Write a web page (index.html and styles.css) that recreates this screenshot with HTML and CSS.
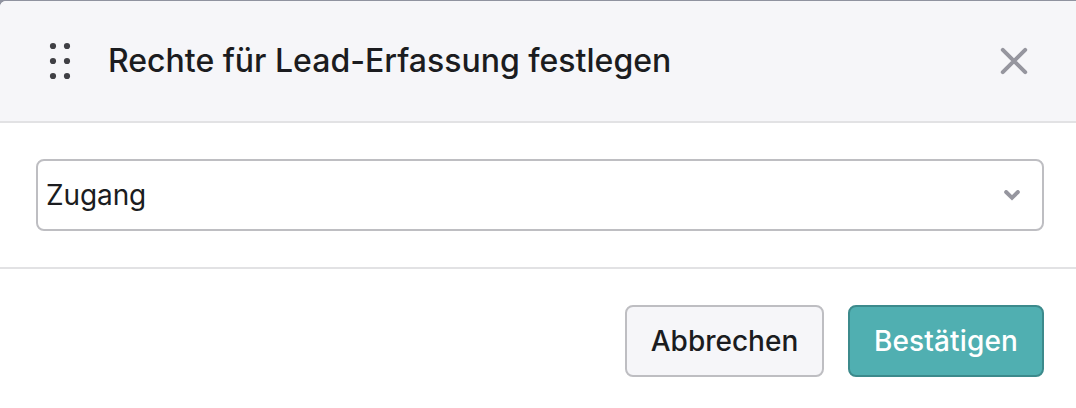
FILE: index.html
```html
<!DOCTYPE html>
<html lang="de">
<head>
    <meta charset="UTF-8">
    <meta name="viewport" content="width=device-width, initial-scale=1.0">
    <title>Rechte für Lead-Erfassung festlegen</title>
    <link rel="stylesheet" href="styles.css">
</head>
<body>
    <div class="dialog">
        <div class="dialog-header">
            <svg class="drag-handle" width="22" height="38" viewBox="0 0 22 38" fill="#404045">
                <circle cx="4" cy="4" r="3.1"/>
                <circle cx="18" cy="4" r="3.1"/>
                <circle cx="4" cy="19" r="3.1"/>
                <circle cx="18" cy="19" r="3.1"/>
                <circle cx="4" cy="34" r="3.1"/>
                <circle cx="18" cy="34" r="3.1"/>
            </svg>
            <h1 class="dialog-title">Rechte für Lead-Erfassung festlegen</h1>
            <button class="close-button" aria-label="Schließen">
                <svg width="28" height="28" viewBox="0 0 28 28" fill="none" stroke="#96969f" stroke-width="4" stroke-linecap="round">
                    <path d="M2.8 2.8L25.2 25.2M25.2 2.8L2.8 25.2"/>
                </svg>
            </button>
        </div>

        <div class="dialog-body">
            <div class="select" tabindex="0">
                <span class="select-label">Zugang</span>
                <svg width="16" height="11" viewBox="0 0 16 11" fill="none" stroke="#96969f" stroke-width="3.9" stroke-linecap="round">
                    <path d="M2.1 2L8 7.8L13.9 2"/>
                </svg>
            </div>
        </div>

        <div class="dialog-footer">
            <button class="button">Abbrechen</button>
            <button class="button button-primary">Bestätigen</button>
        </div>
    </div>
</body>
</html>
```
FILE: styles.css
```css
* {
    box-sizing: border-box;
}

body {
    margin: 0;
    padding-top: 1px;
    height: 408px;
    background-color: #9093a0;
    font-family: Inter, "Liberation Sans", sans-serif;
    color: #1b1c20;
    overflow: hidden;
}

.dialog {
    height: 407px;
    background-color: white;
    border-radius: 6px 0 0 0;
    overflow: hidden;
}

.dialog-header {
    display: flex;
    align-items: center;
    height: 122px;
    padding: 0 48px 0 49px;
    background-color: #f6f6f9;
    border-bottom: 2px solid #e2e2e4;
}

.dialog-title {
    flex: 1;
    margin: 0 0 0 37px;
    font-size: 32px;
    line-height: 40px;
    font-weight: 500;
}

.close-button {
    display: flex;
    padding: 0;
    border: none;
    background: none;
    cursor: pointer;
}

.dialog-body {
    padding: 36px 32px 36px 36px;
    border-bottom: 2px solid #e2e2e4;
}

.select {
    display: flex;
    align-items: center;
    justify-content: space-between;
    height: 72px;
    padding: 0 22px 0 8px;
    border: 2px solid #bebec2;
    border-radius: 8px;
    font-size: 28px;
    letter-spacing: -0.1px;
    cursor: pointer;
}

.dialog-footer {
    display: flex;
    justify-content: flex-end;
    gap: 24px;
    padding: 36px 32px 0 36px;
}

.button {
    width: 199px;
    height: 72px;
    padding: 0;
    background-color: #f6f6f9;
    border: 2px solid #bebec2;
    border-radius: 8px;
    color: #1b1c20;
    font-family: inherit;
    font-size: 28px;
    font-weight: 500;
    cursor: pointer;
}

.button-primary {
    width: 196px;
    background-color: #50afb1;
    border-color: #3c8a8c;
    color: white;
    letter-spacing: 0.15px;
}
```
